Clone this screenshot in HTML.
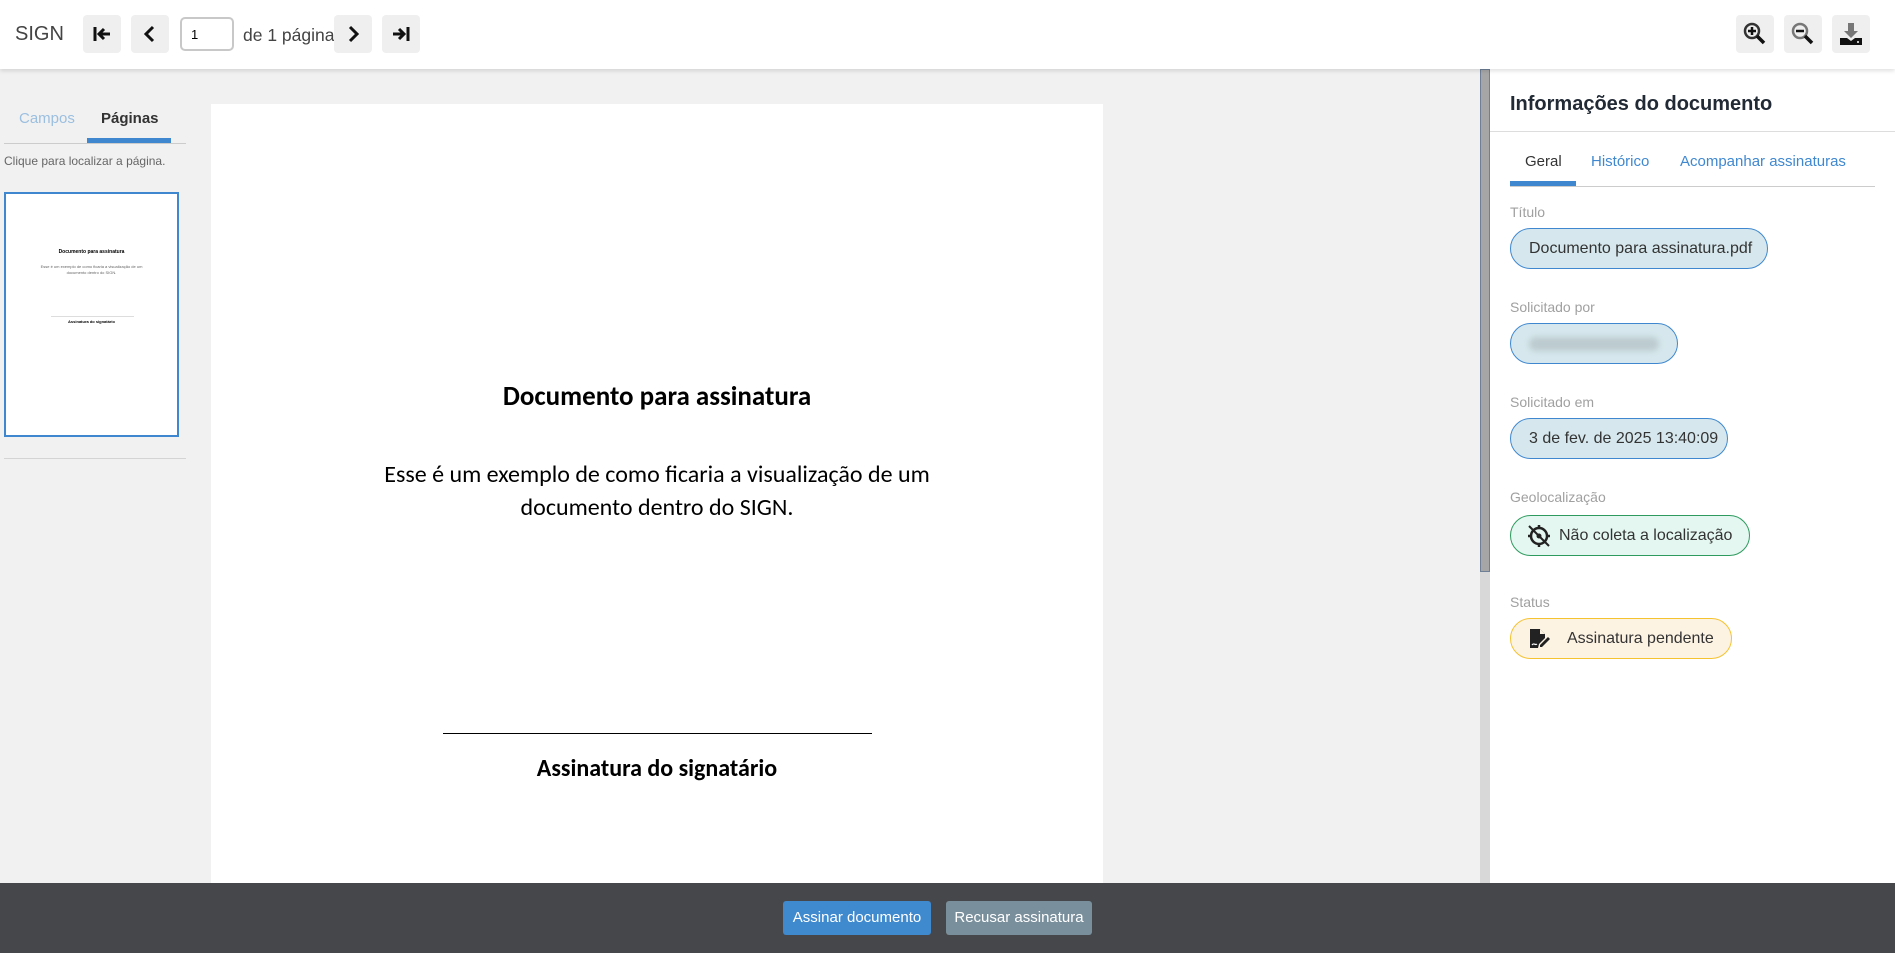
<!DOCTYPE html>
<html><head><meta charset="utf-8"><style>
*{box-sizing:border-box;margin:0;padding:0}
body{width:1895px;height:953px;overflow:hidden;background:#f1f1f1;font-family:"Liberation Sans",sans-serif;position:relative}
.a{position:absolute}
.top{left:0;top:0;width:1895px;height:69px;background:#fff;box-shadow:0 2px 4px rgba(0,0,0,.12);z-index:5}
.btn{position:absolute;top:15px;width:38px;height:38px;background:#efefef;border-radius:4px;display:flex;align-items:center;justify-content:center}
.lbl{position:absolute;left:1510px;font-size:14px;color:#a0a0a0}
.chip{position:absolute;left:1510px;height:41px;border-radius:21px;border:1px solid #3f88d0;background:#d6e8ed;font-size:16px;color:#333;display:flex;align-items:center;padding-left:18px}
.pg{font-family:"Carlito","Liberation Sans",sans-serif;color:#000;text-align:center;position:absolute;left:211px;width:892px}
</style></head><body>
<div class="a top">
 <div class="a" style="left:15px;top:23px;font-size:20px;color:#444">SIGN</div>
 <div class="btn" style="left:83px"><svg width="22" height="22" viewBox="0 0 22 22"><path d="M4 4v14" stroke="#111" stroke-width="3"/><path d="M19 11H9M13 6l-5 5 5 5" stroke="#111" stroke-width="3" fill="none"/></svg></div>
 <div class="btn" style="left:131px"><svg width="22" height="22" viewBox="0 0 22 22"><path d="M14 4l-7 7 7 7" stroke="#111" stroke-width="3" fill="none"/></svg></div>
 <div class="a" style="left:180px;top:17px;width:54px;height:34px;border:2px solid #c8c8c8;border-radius:5px;font-size:13px;padding:8px 0 0 9px">1</div>
 <div class="a" style="left:243px;top:25px;font-size:17.5px;color:#444">de 1 página</div>
 <div class="btn" style="left:334px"><svg width="22" height="22" viewBox="0 0 22 22"><path d="M8 4l7 7-7 7" stroke="#111" stroke-width="3" fill="none"/></svg></div>
 <div class="btn" style="left:382px"><svg width="22" height="22" viewBox="0 0 22 22"><path d="M18 4v14" stroke="#111" stroke-width="3"/><path d="M3 11h10M9 6l5 5-5 5" stroke="#111" stroke-width="3" fill="none"/></svg></div>
 <div class="btn" style="left:1736px"><svg width="26" height="26" viewBox="0 0 26 26"><circle cx="10" cy="10" r="7" stroke="#333" stroke-width="2.5" fill="none"/><path d="M15 15l7 7" stroke="#111" stroke-width="3.5"/><path d="M10 6v8M6 10h8" stroke="#111" stroke-width="2.5"/></svg></div>
 <div class="btn" style="left:1784px"><svg width="26" height="26" viewBox="0 0 26 26"><circle cx="10" cy="10" r="7" stroke="#777" stroke-width="2.5" fill="none"/><path d="M15 15l7 7" stroke="#111" stroke-width="3.5"/><path d="M6 10h8" stroke="#111" stroke-width="2.5"/></svg></div>
 <div class="btn" style="left:1832px"><svg width="26" height="26" viewBox="0 0 26 26"><path d="M10 2h6v8h4l-7 7-7-7h4z" fill="#777"/><path d="M2 17h7l4 3 4-3h7v7H2z" fill="#111"/><circle cx="20" cy="21" r="1" fill="#fff"/></svg></div>
</div>
<div class="a" style="left:19px;top:110px;font-size:15px;color:#9bbfe0">Campos</div>
<div class="a" style="left:101px;top:110px;font-size:15px;color:#333;font-weight:bold">Páginas</div>
<div class="a" style="left:4px;top:143px;width:182px;height:1px;background:#ccc"></div>
<div class="a" style="left:87px;top:138px;width:84px;height:5px;background:#3f88d0"></div>
<div class="a" style="left:4px;top:154px;font-size:12px;color:#666">Clique para localizar a página.</div>
<div class="a" style="left:4px;top:192px;width:175px;height:245px;border:2px solid #3f88d0;background:#fff">
 <div style="position:absolute;top:55px;width:100%;text-align:center;font-size:5px;font-weight:bold">Documento para assinatura</div>
 <div style="position:absolute;top:70px;width:100%;text-align:center;font-size:4px;color:#666;line-height:6px">Esse é um exemplo de como ficaria a visualização de um<br>documento dentro do SIGN.</div>
 <div style="position:absolute;top:122px;left:45px;width:83px;height:1px;background:#ddd"></div>
 <div style="position:absolute;top:125px;width:100%;text-align:center;font-size:4px;font-weight:bold">Assinatura do signatário</div>
</div>
<div class="a" style="left:4px;top:458px;width:182px;height:1px;background:#d4d4d4"></div>
<div class="a" style="left:211px;top:104px;width:892px;height:780px;background:#fff"></div>
<div class="pg" style="top:380px;font-size:27px;font-weight:bold">Documento para assinatura</div>
<div class="pg" style="top:458px;font-size:24px;line-height:33px">Esse é um exemplo de como ficaria a visualização de um<br>documento dentro do SIGN.</div>
<div class="a" style="left:443px;top:733px;width:429px;height:1px;background:#000"></div>
<div class="pg" style="top:754px;font-size:24px;font-weight:bold">Assinatura do signatário</div>
<div class="a" style="left:1480px;top:69px;width:10px;height:815px;background:#d8d8d8"></div>
<div class="a" style="left:1480px;top:69px;width:10px;height:503px;background:#a6a6a6;border:1px solid #6f7f95"></div>
<div class="a" style="left:1490px;top:69px;width:405px;height:815px;background:#fff"></div>
<div class="a" style="left:1510px;top:93px;font-size:20px;font-weight:bold;color:#222a35">Informações do documento</div>
<div class="a" style="left:1490px;top:131px;width:405px;height:1px;background:#ddd"></div>
<div class="a" style="left:1525px;top:153px;font-size:15px;color:#333">Geral</div>
<div class="a" style="left:1591px;top:153px;font-size:15px;color:#3f88d0">Histórico</div>
<div class="a" style="left:1680px;top:153px;font-size:15px;color:#3f88d0">Acompanhar assinaturas</div>
<div class="a" style="left:1510px;top:186px;width:365px;height:1px;background:#ccc"></div>
<div class="a" style="left:1510px;top:181px;width:66px;height:5px;background:#3f88d0"></div>
<div class="lbl" style="top:204px">Título</div>
<div class="chip" style="top:228px;width:258px">Documento para assinatura.pdf</div>
<div class="lbl" style="top:299px">Solicitado por</div>
<div class="chip" style="top:323px;width:168px"><div style="width:130px;height:14px;background:#bccbcf;border-radius:7px;filter:blur(3px)"></div></div>
<div class="lbl" style="top:394px">Solicitado em</div>
<div class="chip" style="top:418px;width:218px">3 de fev. de 2025 13:40:09</div>
<div class="lbl" style="top:489px">Geolocalização</div>
<div class="chip" style="top:515px;width:240px;border-color:#2e9a5e;background:#e4f7f1;padding-left:14px"><svg width="28" height="26" viewBox="0 0 28 26" style="margin-right:6px"><circle cx="14" cy="13" r="8" stroke="#222" stroke-width="2.5" fill="none"/><path d="M14 13m-2.5 0a2.5 2.5 0 1 0 5 0a2.5 2.5 0 1 0-5 0" fill="#222"/><path d="M14 2v4M14 20v4M3 13h4M21 13h4" stroke="#222" stroke-width="2.5"/><path d="M4 3l20 20" stroke="#222" stroke-width="2"/></svg>Não coleta a localização</div>
<div class="lbl" style="top:594px">Status</div>
<div class="chip" style="top:618px;width:222px;border-color:#f5c230;background:#fdf3e3;padding-left:16px"><svg width="24" height="24" viewBox="0 0 24 24" style="margin-right:16px"><path d="M3 2h10l5 5v4l-6 6-1 4H3z" fill="#222"/><path d="M13 2v5h5" fill="#fdf3e3"/><path d="M13 18l8-8 2 2-8 8h-2z" fill="#222"/><path d="M5 18c2-3 3 1 5-1" stroke="#fff" stroke-width="1.2" fill="none"/></svg>Assinatura pendente</div>
<div class="a" style="left:0;top:883px;width:1895px;height:70px;background:#46474b"></div>
<div class="a" style="left:783px;top:901px;width:148px;height:34px;background:#3f89cf;border-radius:3px;color:#fff;font-size:15px;text-align:center;line-height:34px">Assinar documento</div>
<div class="a" style="left:946px;top:901px;width:146px;height:34px;background:#7a8f9c;border-radius:3px;color:#fff;font-size:15px;text-align:center;line-height:34px">Recusar assinatura</div>
</body></html>
